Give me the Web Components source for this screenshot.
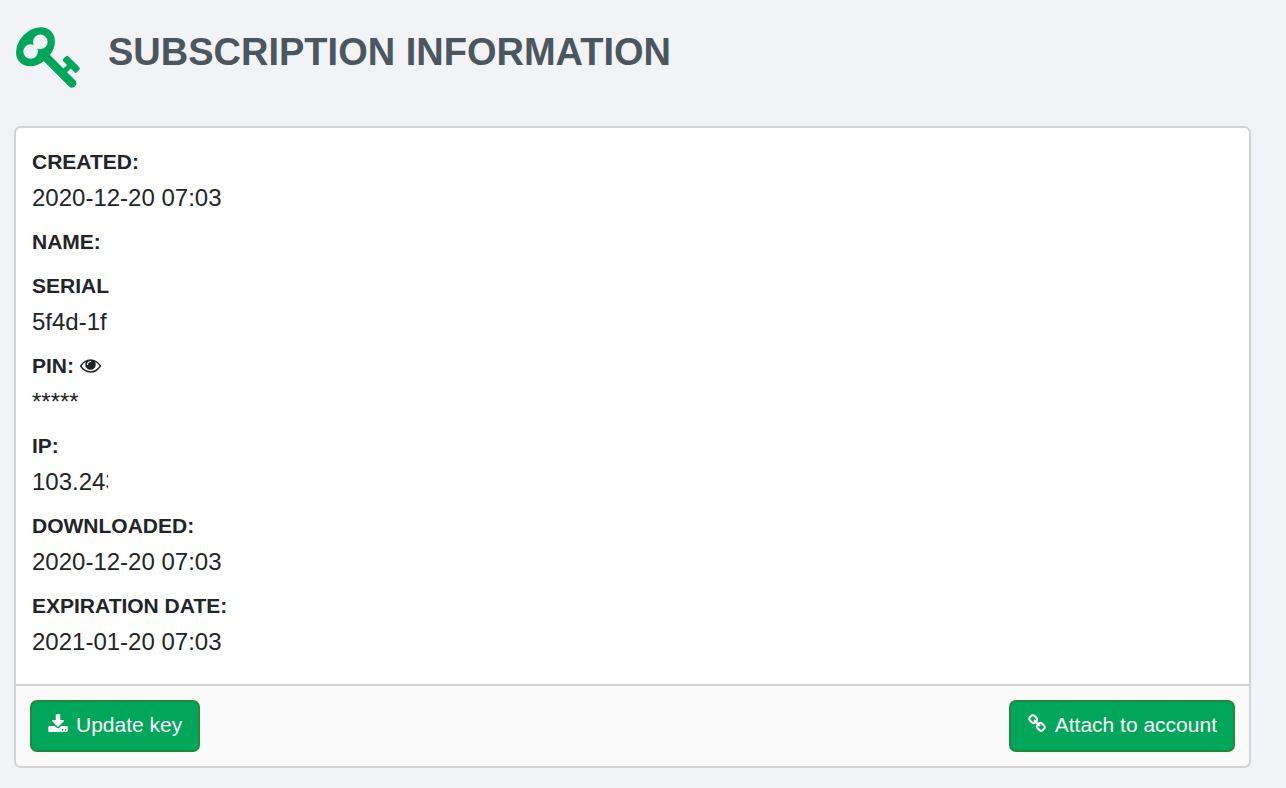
<!DOCTYPE html>
<html lang="en">
<head>
<meta charset="utf-8">
<meta name="viewport" content="width=device-width, initial-scale=1">
<title>Subscription information</title>
<style>
  :root {
    --color-page: #f1f3f7;
    --color-text: #212529;
    --color-heading: #4b565e;
    --color-border: #d3d3d3;
    --color-footer: #fafafa;
    --color-green: #00a65a;
    --color-green-dark: #1e8b37;
    --radius: 7px;
  }

  body {
    margin: 0;
    background: var(--color-page);
    color: var(--color-text);
    font: 24px/36px "Liberation Sans", Arial, sans-serif;
  }
</style>
</head>
<body>
<subscription-page>
  <page-heading slot="heading" icon="key">SUBSCRIPTION INFORMATION</page-heading>
  <info-card>
    <info-field label="CREATED:">2020-12-20 07:03</info-field>
    <info-field label="NAME:"></info-field>
    <info-field label="SERIAL" clipped>5f4d-1f</info-field>
    <info-field label="PIN:">
      <reveal-button slot="action"></reveal-button>
      *****
    </info-field>
    <info-field label="IP:" clipped>103.243</info-field>
    <info-field label="DOWNLOADED:">2020-12-20 07:03</info-field>
    <info-field label="EXPIRATION DATE:">2021-01-20 07:03</info-field>
    <action-button slot="footer" icon="download">Update key</action-button>
    <action-button slot="footer" icon="chain">Attach to account</action-button>
  </info-card>
</subscription-page>

<script>
  const ICONS = {
    key: {
      box: '0 128 1684 1592',
      path: 'M832 512q0-80-56-136t-136-56-136 56-56 136q0 42 19 83-41-19-83-19-80 0-136 56t-56 136 56 136 136 56 136-56 56-136q0-42-19-83 41 19 83 19 80 0 136-56t56-136zm851 704q0 17-49 66t-66 49q-9 0-28.500-16t-36.500-33-38.500-40-24.500-26l-96 96 220 220q28 28 28 68 0 42-39 81t-81 39q-40 0-68-28l-671-671q-176 131-365 131-163 0-265.500-102.500t-102.500-265.500q0-160 95-313t248-248 313-95q163 0 265.500 102.500t102.500 265.500q0 189-131 365l355 355 96-96q-3-3-26-24.500t-40-38.500-33-36.500-16-28.500q0-17 49-66t66-49q13 0 23 10 6 6 46 44.500t82 79.500 86.500 86 73 78 28.500 41z'
    },
    eye: {
      box: '0 384 1792 1152',
      path: 'M1664 960q-152-236-381-353 61 104 61 225 0 185-131.500 316.500t-316.500 131.500-316.500-131.500-131.500-316.500q0-121 61-225-229 117-381 353 133 205 333.500 326.500t434.500 121.500 434.500-121.500 333.500-326.500zm-720-384q0-20-14-34t-34-14q-125 0-214.500 89.500t-89.500 214.500q0 20 14 34t34 14 34-14 14-34q0-86 61-147t147-61q20 0 34-14t14-34zm848 384q0 34-20 69-140 230-376.500 368.500t-499.500 138.500-499.500-139-376.500-368q-20-35-20-69t20-69q140-229 376.500-368t499.500-139 499.500 139 376.500 368q20 35 20 69z'
    },
    download: {
      box: '64 0 1664 1536',
      path: 'M1344 1344q0-26-19-45t-45-19-45 19-19 45 19 45 45 19 45-19 19-45zm256 0q0-26-19-45t-45-19-45 19-19 45 19 45 45 19 45-19 19-45zm128-224v320q0 40-28 68t-68 28h-1472q-40 0-68-28t-28-68v-320q0-40 28-68t68-28h465l135 136q58 56 136 56t136-56l136-136h464q40 0 68 28t28 68zm-325-569q17 41-14 70l-448 448q-18 19-45 19t-45-19l-448-448q-31-29-14-70 17-39 59-39h256v-448q0-26 19-45t45-19h256q26 0 45 19t19 45v448h256q42 0 59 39z'
    },
    chain: {
      box: '64 0 1664 1664',
      path: 'M1520 1216q0-40-28-68l-208-208q-28-28-68-28-42 0-72 32 3 3 19 18.500t21.500 21.500 15 19 13 25.500 3.500 27.500q0 40-28 68t-68 28q-15 0-27.500-3.500t-25.500-13-19-15-21.500-21.500-18.500-19q-33 31-33 73 0 40 28 68l206 207q27 27 68 27 40 0 68-26l147-146q28-28 28-67zm-703-705q0-40-28-68l-206-207q-28-28-68-28-39 0-68 27l-147 146q-28 28-28 67 0 40 28 68l208 208q27 27 68 27 42 0 72-31-3-3-19-18.500t-21.500-21.500-15-19-13-25.500-3.500-27.500q0-40 28-68t68-28q15 0 27.500 3.500t25.500 13 19 15 21.500 21.500 18.500 19q33-31 33-73zm895 705q0 120-85 203l-147 146q-83 83-203 83-121 0-204-85l-206-207q-83-83-83-203 0-123 88-209l-88-88q-86 88-208 88-120 0-204-84l-208-208q-84-84-84-204t85-203l147-146q83-83 203-83 121 0 204 85l206 207q83 83 83 203 0 123-88 209l88 88q86-88 208-88 120 0 204 84l208 208q84 84 84 204z'
    }
  };

  function icon(name) {
    const { box, path } = ICONS[name];
    return `<svg viewBox="${box}" fill="currentColor" aria-hidden="true"><path d="${path}"/></svg>`;
  }

  class SubscriptionPage extends HTMLElement {
    constructor() {
      super();
      this.attachShadow({ mode: 'open' });
      this.shadowRoot.innerHTML = `
        <style>
          :host {
            display: block;
            padding: 27px 35px 20px 14px;
          }

          main {
            display: flex;
            flex-direction: column;
            gap: 38px;
          }
        </style>
        <main>
          <slot name="heading"></slot>
          <slot></slot>
        </main>
      `;
    }
  }

  class PageHeading extends HTMLElement {
    constructor() {
      super();
      this.attachShadow({ mode: 'open' });
    }

    connectedCallback() {
      this.shadowRoot.innerHTML = `
        <style>
          :host {
            display: flex;
            align-items: flex-start;
            gap: 28px;
            padding-left: 2px;
          }

          svg {
            display: block;
            flex: none;
            width: 64px;
            height: 61px;
            color: var(--color-green);
          }

          h1 {
            margin: 0;
            color: var(--color-heading);
            font-size: 38px;
            line-height: 50px;
          }
        </style>
        ${icon(this.getAttribute('icon'))}
        <h1><slot></slot></h1>
      `;
    }
  }

  class InfoCard extends HTMLElement {
    constructor() {
      super();
      this.attachShadow({ mode: 'open' });
      this.shadowRoot.innerHTML = `
        <style>
          :host {
            display: block;
            border: 2px solid var(--color-border);
            border-radius: var(--radius);
            background: #fff;
            overflow: hidden;
          }

          .body {
            padding: 16px;
          }

          footer {
            display: flex;
            flex-wrap: wrap;
            justify-content: space-between;
            gap: 14px;
            padding: 14px;
            border-top: 2px solid var(--color-border);
            background: var(--color-footer);
          }
        </style>
        <div class="body"><slot></slot></div>
        <footer><slot name="footer"></slot></footer>
      `;
    }
  }

  class InfoField extends HTMLElement {
    constructor() {
      super();
      this.attachShadow({ mode: 'open' });
    }

    connectedCallback() {
      this.shadowRoot.innerHTML = `
        <style>
          :host {
            display: block;
            padding-bottom: 8px;
          }

          dl,
          dd {
            margin: 0;
          }

          dt {
            font-size: 21px;
            font-weight: bold;
          }

          :host([clipped]) dd {
            width: 76px;
            overflow: hidden;
            white-space: nowrap;
          }
        </style>
        <dl>
          <dt>${this.getAttribute('label')} <slot name="action"></slot></dt>
          <dd><slot></slot></dd>
        </dl>
      `;
    }
  }

  class RevealButton extends HTMLElement {
    constructor() {
      super();
      this.attachShadow({ mode: 'open' });
      this.shadowRoot.innerHTML = `
        <style>
          :host {
            display: inline-block;
            line-height: 1;
          }

          button {
            display: block;
            padding: 0;
            border: none;
            background: none;
            color: inherit;
            cursor: pointer;
          }

          svg {
            display: block;
            width: 21px;
            height: 14px;
          }
        </style>
        <button type="button" aria-label="Show PIN">${icon('eye')}</button>
      `;
    }
  }

  class ActionButton extends HTMLElement {
    constructor() {
      super();
      this.attachShadow({ mode: 'open' });
    }

    connectedCallback() {
      this.shadowRoot.innerHTML = `
        <style>
          :host {
            display: block;
          }

          button {
            display: flex;
            align-items: center;
            gap: 8px;
            padding: 7px 16px 9px;
            border: 2px solid var(--color-green-dark);
            border-radius: var(--radius);
            background: var(--color-green);
            color: #fff;
            font: inherit;
            font-size: 21px;
            line-height: 32px;
            cursor: pointer;
          }

          button:hover {
            background: var(--color-green-dark);
          }

          svg {
            display: block;
            width: 20px;
            height: 18px;
            margin-bottom: 4px;
          }
        </style>
        <button type="button">${icon(this.getAttribute('icon'))}<span><slot></slot></span></button>
      `;
    }
  }

  customElements.define('subscription-page', SubscriptionPage);
  customElements.define('page-heading', PageHeading);
  customElements.define('info-card', InfoCard);
  customElements.define('info-field', InfoField);
  customElements.define('reveal-button', RevealButton);
  customElements.define('action-button', ActionButton);
</script>
</body>
</html>
